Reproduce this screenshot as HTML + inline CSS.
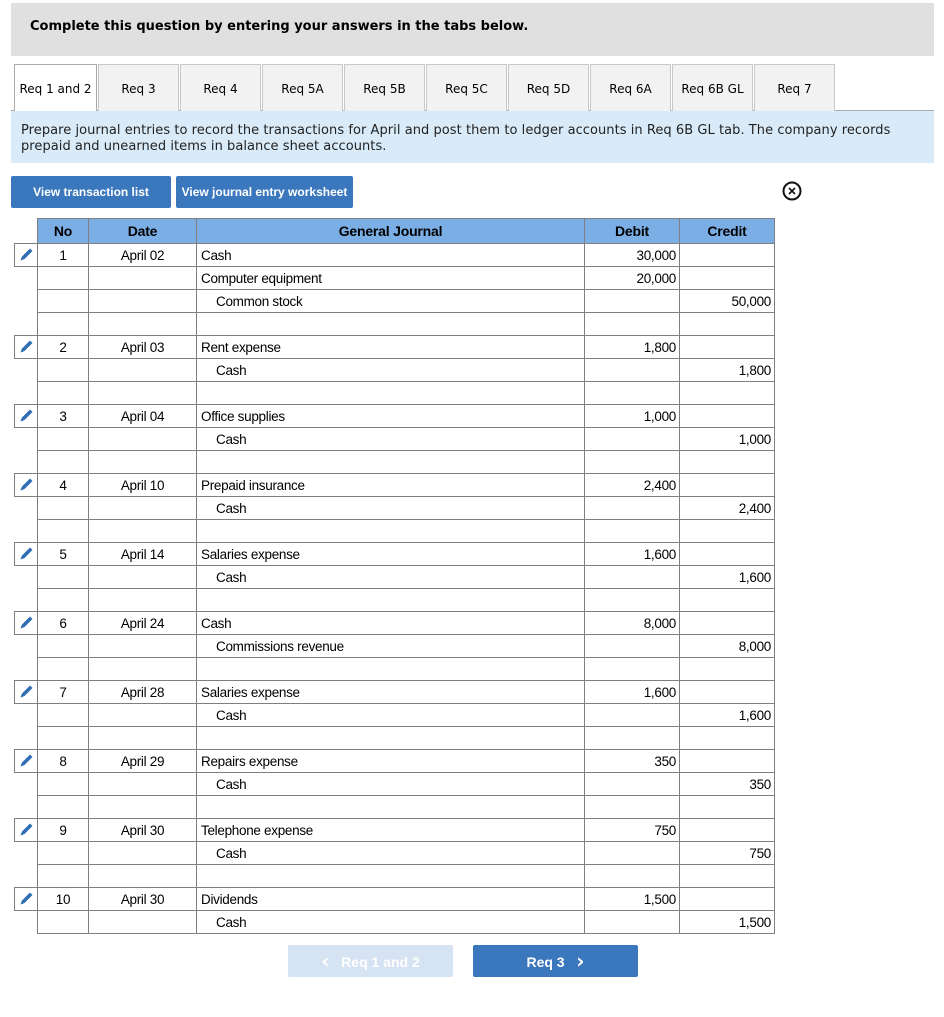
<!DOCTYPE html>
<html><head><meta charset="utf-8"><style>
*{box-sizing:border-box}
body{margin:0;width:944px;height:1017px;background:#fff;position:relative;font-family:"Liberation Sans",Arial,sans-serif;color:#000;overflow:hidden}
.hdr{position:absolute;left:11px;top:3px;width:923px;height:53px;background:#e0e0e0}
.hdr span{position:absolute;left:19px;top:16px;font:bold 13px "DejaVu Sans",Verdana,sans-serif}
.tab{position:absolute;top:64px;height:47px;background:#f2f2f2;border:1px solid #c8c8c8;border-bottom:none;font:12px "DejaVu Sans",Verdana,sans-serif;text-align:center;line-height:48px}
.tab.act{background:#fff;border-color:#aaa}
.tabline{position:absolute;left:11px;top:110px;width:923px;height:1px;background:#aaa}
.info{position:absolute;left:11px;top:111px;width:923px;height:52px;background:#d9ebf9;font:13px "DejaVu Sans",Verdana,sans-serif;padding:12px 0 0 10px;line-height:16px;color:#222;letter-spacing:0.05px}
.btn{position:absolute;top:176px;height:32px;background:#3b77bd;color:#fff;font:bold 12px "Liberation Sans",Arial,sans-serif;text-align:center;line-height:32px;border-radius:2px}
.x{position:absolute;left:782px;top:181px;width:20px;height:20px}
.c{position:absolute;height:24px;font-size:13.5px;letter-spacing:-0.3px;line-height:23px;border:1px solid #7f7f7f}
.h{background:#7aaee4;font-weight:bold;text-align:center;line-height:23px;font-size:14px;letter-spacing:-0.2px}
.pen{position:absolute;width:24px;height:24px;border:1px solid #7f7f7f;border-right:none}
.nb{position:absolute;top:945px;height:32px;width:165px;color:#fff;font:bold 14px "Liberation Sans",Arial,sans-serif;text-align:center;line-height:32px;border-radius:2px}
.nb b{font-size:20px;font-family:"DejaVu Sans",sans-serif;vertical-align:-1px}
</style></head><body>
<div class="hdr"><span>Complete this question by entering your answers in the tabs below.</span></div>
<div class="tabline"></div>
<div class="tab act" style="left:14px;width:83px;height:48px">Req 1 and 2</div>
<div class="tab" style="left:98px;width:81px">Req 3</div>
<div class="tab" style="left:180px;width:81px">Req 4</div>
<div class="tab" style="left:262px;width:81px">Req 5A</div>
<div class="tab" style="left:344px;width:81px">Req 5B</div>
<div class="tab" style="left:426px;width:81px">Req 5C</div>
<div class="tab" style="left:508px;width:81px">Req 5D</div>
<div class="tab" style="left:590px;width:81px">Req 6A</div>
<div class="tab" style="left:672px;width:81px">Req 6B GL</div>
<div class="tab" style="left:754px;width:81px">Req 7</div>
<div class="info">Prepare journal entries to record the transactions for April and post them to ledger accounts in Req 6B GL tab. The company records prepaid and unearned items in balance sheet accounts.</div>
<div class="btn" style="left:11px;width:160px">View transaction list</div>
<div class="btn" style="left:176px;width:177px">View journal entry worksheet</div>
<svg class="x" viewBox="0 0 20 20"><circle cx="10" cy="10" r="8.5" fill="none" stroke="#111" stroke-width="2"/><path d="M7 7 L13 13 M13 7 L7 13" stroke="#111" stroke-width="1.6"/></svg>
<div id="t"></div>
<div class="nb" style="left:288px;background:#d6e3f2"><b>&lsaquo;</b>&nbsp;&nbsp; Req 1 and 2</div>
<div class="nb" style="left:473px;background:#3b77bd">Req 3 &nbsp;&nbsp;<b>&rsaquo;</b></div>
<script>
var cols=[[37,52],[88,109],[196,389],[584,96],[679,96]];
var h='';
function cell(ci,y,txt,st,cls){var c=cols[ci];h+='<div class="c '+(cls||'')+'" style="left:'+c[0]+'px;top:'+y+'px;width:'+c[1]+'px;'+(st||'')+'">'+txt+'</div>';}
var hd=['No','Date','General Journal','Debit','Credit'];
for(var i=0;i<5;i++)cell(i,218,hd[i],'height:26px;line-height:24px','h');
var E=[[1,'April 02',[['Cash',0,'30,000',''],['Computer equipment',0,'20,000',''],['Common stock',1,'','50,000']]],
[2,'April 03',[['Rent expense',0,'1,800',''],['Cash',1,'','1,800']]],
[3,'April 04',[['Office supplies',0,'1,000',''],['Cash',1,'','1,000']]],
[4,'April 10',[['Prepaid insurance',0,'2,400',''],['Cash',1,'','2,400']]],
[5,'April 14',[['Salaries expense',0,'1,600',''],['Cash',1,'','1,600']]],
[6,'April 24',[['Cash',0,'8,000',''],['Commissions revenue',1,'','8,000']]],
[7,'April 28',[['Salaries expense',0,'1,600',''],['Cash',1,'','1,600']]],
[8,'April 29',[['Repairs expense',0,'350',''],['Cash',1,'','350']]],
[9,'April 30',[['Telephone expense',0,'750',''],['Cash',1,'','750']]],
[10,'April 30',[['Dividends',0,'1,500',''],['Cash',1,'','1,500']]]];
var y=243;
E.forEach(function(e,k){
 h+='<div class="pen" style="left:14px;top:'+y+'px"><svg width="22" height="22" viewBox="0 0 22 22"><path d="M6 16 L7 12.5 L15 4.5 L17.5 7 L9.5 15 Z" fill="#2f6db5"/><path d="M5.5 16.5 L6.6 13.2 L8.8 15.4 Z" fill="#2f6db5"/></svg></div>';
 var rows=e[2].slice(); if(k<9) rows.push(['',0,'','']);
 rows.forEach(function(r,j){
  cell(0,y,j==0?e[0]:'','text-align:center');
  cell(1,y,j==0?e[1]:'','text-align:center');
  cell(2,y,r[0],'padding-left:'+(r[1]?19:4)+'px');
  cell(3,y,r[2],'text-align:right;padding-right:3px');
  cell(4,y,r[3],'text-align:right;padding-right:3px');
  y+=23;
 });
});
document.getElementById('t').innerHTML=h;
</script>
</body></html>
